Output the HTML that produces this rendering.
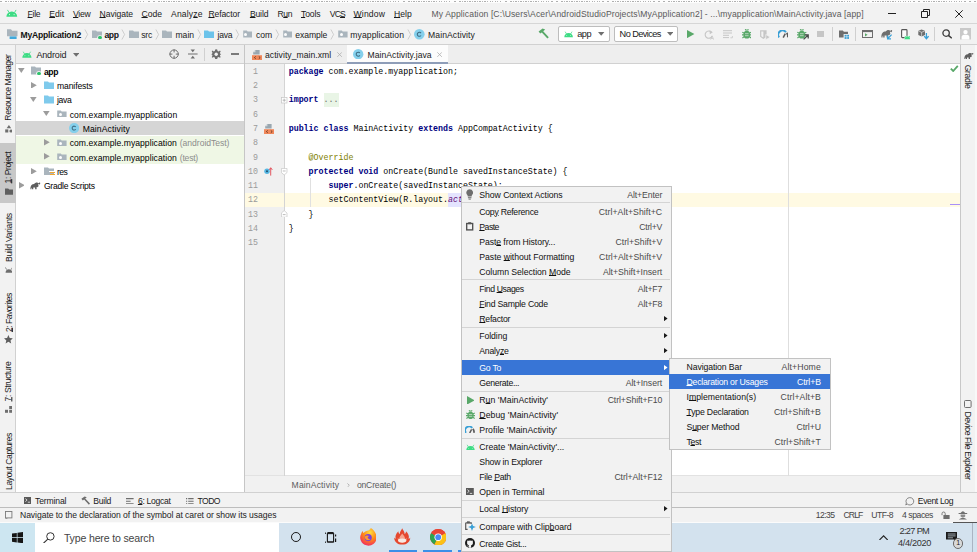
<!DOCTYPE html>
<html><head><meta charset="utf-8"><title>Android Studio</title>
<style>
html,body{margin:0;padding:0;}
body{width:977px;height:552px;overflow:hidden;position:relative;background:#f2f2f2;font-family:"Liberation Sans",sans-serif;}
.t{position:absolute;white-space:pre;font-family:"Liberation Sans",sans-serif;}
.r{position:absolute;}
u{text-decoration:underline;text-underline-offset:0.4px;text-decoration-thickness:0.7px;}
</style></head><body>
<div class="r" style="left:0px;top:0px;width:977px;height:552px;background:#f2f2f2;"></div>
<div class="r" style="left:0px;top:23px;width:977px;height:0.9px;background:#d6d6d6;"></div>
<div class="r" style="left:0px;top:44px;width:977px;height:1px;background:#d1d1d1;"></div>
<div class="r" style="left:15px;top:45px;width:1px;height:448px;background:#d1d1d1;"></div>
<div class="r" style="left:16px;top:45px;width:944px;height:18px;background:#eeeeee;"></div>
<div class="r" style="left:16px;top:63.6px;width:228px;height:429px;background:#fff;"></div>
<div class="r" style="left:16px;top:62.8px;width:228px;height:1px;background:#d1d1d1;"></div>
<div class="r" style="left:243.8px;top:45px;width:1px;height:447px;background:#c6c6c6;"></div>
<div class="r" style="left:244.8px;top:63.8px;width:715.2px;height:412px;background:#fff;"></div>
<div class="r" style="left:244.8px;top:62.9px;width:715.2px;height:1px;background:#d1d1d1;"></div>
<div class="r" style="left:244.8px;top:63.8px;width:39.6px;height:412px;background:#f0f0f0;"></div>
<div class="r" style="left:960px;top:45px;width:0.9px;height:447px;background:#c8c8c8;"></div>
<div class="r" style="left:244.8px;top:475.4px;width:715.2px;height:16.6px;background:#f1f1f1;"></div>
<div class="r" style="left:244.8px;top:475.2px;width:715.2px;height:0.8px;background:#e2e2e2;"></div>
<div class="r" style="left:0px;top:492px;width:977px;height:1px;background:#d1d1d1;"></div>
<div class="r" style="left:0px;top:506.8px;width:977px;height:0.9px;background:#bdbdbd;"></div>
<div class="r" style="left:0px;top:0px;width:977px;height:3.2px;background:#fdfdfd;"></div>
<div class="r" style="left:0;top:0.7px;width:977px;height:1.1px;background:repeating-linear-gradient(90deg,#9c9c9c 0 1.7px,#fdfdfd 1.7px 2.7px,#a4a4a4 2.7px 3.5px,#fdfdfd 3.5px 5.1px);opacity:.8"></div>
<svg class="r" style="left:6px;top:9.2px;" width="11.6" height="8" viewBox="0 0 13 9"><path d="M0.4 8.8 A6.1 6 0 0 1 12.6 8.8 Z" fill="#3ddc84"/><path d="M3.2 3.6 L1.9 1.4 M9.8 3.6 L11.1 1.4" stroke="#3ddc84" stroke-width="1" stroke-linecap="round"/><circle cx="3.9" cy="6.3" r="0.6" fill="#eafff3"/><circle cx="9.1" cy="6.3" r="0.6" fill="#eafff3"/></svg>
<div class="t" style="top:8.71px;height:11.18px;line-height:11.18px;font-size:8.6px;color:#1a1a1a;left:27.6px;letter-spacing:-0.290px;"><u>F</u>ile</div>
<div class="t" style="top:8.71px;height:11.18px;line-height:11.18px;font-size:8.6px;color:#1a1a1a;left:49.3px;letter-spacing:-0.028px;"><u>E</u>dit</div>
<div class="t" style="top:8.71px;height:11.18px;line-height:11.18px;font-size:8.6px;color:#1a1a1a;left:73px;letter-spacing:-0.246px;"><u>V</u>iew</div>
<div class="t" style="top:8.71px;height:11.18px;line-height:11.18px;font-size:8.6px;color:#1a1a1a;left:99.5px;letter-spacing:-0.053px;"><u>N</u>avigate</div>
<div class="t" style="top:8.71px;height:11.18px;line-height:11.18px;font-size:8.6px;color:#1a1a1a;left:141.5px;letter-spacing:-0.012px;"><u>C</u>ode</div>
<div class="t" style="top:8.71px;height:11.18px;line-height:11.18px;font-size:8.6px;color:#1a1a1a;left:171px;letter-spacing:0.146px;">Analy<u>z</u>e</div>
<div class="t" style="top:8.71px;height:11.18px;line-height:11.18px;font-size:8.6px;color:#1a1a1a;left:208.4px;letter-spacing:-0.111px;"><u>R</u>efactor</div>
<div class="t" style="top:8.71px;height:11.18px;line-height:11.18px;font-size:8.6px;color:#1a1a1a;left:249.9px;letter-spacing:-0.142px;"><u>B</u>uild</div>
<div class="t" style="top:8.71px;height:11.18px;line-height:11.18px;font-size:8.6px;color:#1a1a1a;left:277.5px;letter-spacing:-0.422px;">R<u>u</u>n</div>
<div class="t" style="top:8.71px;height:11.18px;line-height:11.18px;font-size:8.6px;color:#1a1a1a;left:301px;letter-spacing:-0.113px;"><u>T</u>ools</div>
<div class="t" style="top:8.71px;height:11.18px;line-height:11.18px;font-size:8.6px;color:#1a1a1a;left:329.7px;letter-spacing:-0.791px;">VC<u>S</u></div>
<div class="t" style="top:8.71px;height:11.18px;line-height:11.18px;font-size:8.6px;color:#1a1a1a;left:353.6px;letter-spacing:0.137px;"><u>W</u>indow</div>
<div class="t" style="top:8.71px;height:11.18px;line-height:11.18px;font-size:8.6px;color:#1a1a1a;left:394px;letter-spacing:0.003px;"><u>H</u>elp</div>
<div class="t" style="top:8.71px;height:11.18px;line-height:11.18px;font-size:8.6px;color:#5a5a5a;left:431.6px;letter-spacing:0.099px;">My Application [C:\Users\Acer\AndroidStudioProjects\MyApplication2] - ...\myapplication\MainActivity.java [app]</div>
<div class="r" style="left:888px;top:13px;width:7.5px;height:1px;background:#222;"></div>
<svg class="r" style="left:921px;top:9px;" width="9" height="9" viewBox="0 0 9 9"><path d="M0.5 2.5 H6.5 V8.5 H0.5 Z M2.5 2.5 V0.5 H8.5 V6.5 H6.5" fill="none" stroke="#222" stroke-width="1"/></svg>
<svg class="r" style="left:955px;top:9.5px;" width="8" height="8" viewBox="0 0 8 8"><path d="M0.3 0.3 L7.7 7.7 M7.7 0.3 L0.3 7.7" stroke="#222" stroke-width="1"/></svg>
<svg class="r" style="left:7px;top:29.2px;" width="11" height="10.5" viewBox="0 0 11 10.5"><path d="M0 0.3 H4 L5.2 1.8 H10.5 V7.2 H0 Z" fill="#aab5bd"/><rect x="2.6" y="7.4" width="7" height="2.6" fill="#40a9dc"/></svg>
<div class="t" style="top:29.51px;height:11.18px;line-height:11.18px;font-size:8.6px;color:#111;left:20.5px;font-weight:bold;letter-spacing:-0.215px;">MyApplication2</div>
<svg class="r" style="left:84px;top:28.799999999999997px;" width="5" height="11" viewBox="0 0 5 11"><path d="M0.9 0.5 L3.6 5.5 L0.9 10.5" fill="none" stroke="#c2c2c2" stroke-width="0.75"/></svg>
<svg class="r" style="left:91.5px;top:29.75px;" width="10.5" height="8.5" viewBox="0 0 10.5 8.5"><path d="M0 0.5 H4 L5 1.6 H10.5 V8.5 H0 Z" fill="#aab5bd"/></svg>
<div class="r" style="left:98.2px;top:35.5px;width:3.6px;height:3.6px;border-radius:50%;background:#2dc26b;box-shadow:0 0 0 0.8px #f2f2f2"></div>
<div class="t" style="top:29.51px;height:11.18px;line-height:11.18px;font-size:8.6px;color:#111;left:104.4px;font-weight:bold;letter-spacing:-0.360px;">app</div>
<svg class="r" style="left:121px;top:28.799999999999997px;" width="5" height="11" viewBox="0 0 5 11"><path d="M0.9 0.5 L3.6 5.5 L0.9 10.5" fill="none" stroke="#c2c2c2" stroke-width="0.75"/></svg>
<svg class="r" style="left:128.6px;top:29.75px;" width="10.5" height="8.5" viewBox="0 0 10.5 8.5"><path d="M0 0.5 H4 L5 1.6 H10.5 V8.5 H0 Z" fill="#aab5bd"/></svg>
<div class="t" style="top:29.51px;height:11.18px;line-height:11.18px;font-size:8.6px;color:#1a1a1a;left:141.3px;letter-spacing:-0.256px;">src</div>
<svg class="r" style="left:154.8px;top:28.799999999999997px;" width="5" height="11" viewBox="0 0 5 11"><path d="M0.9 0.5 L3.6 5.5 L0.9 10.5" fill="none" stroke="#c2c2c2" stroke-width="0.75"/></svg>
<svg class="r" style="left:161.5px;top:29.75px;" width="10.5" height="8.5" viewBox="0 0 10.5 8.5"><path d="M0 0.5 H4 L5 1.6 H10.5 V8.5 H0 Z" fill="#aab5bd"/></svg>
<div class="t" style="top:29.51px;height:11.18px;line-height:11.18px;font-size:8.6px;color:#1a1a1a;left:175.4px;letter-spacing:0.040px;">main</div>
<svg class="r" style="left:197.3px;top:28.799999999999997px;" width="5" height="11" viewBox="0 0 5 11"><path d="M0.9 0.5 L3.6 5.5 L0.9 10.5" fill="none" stroke="#c2c2c2" stroke-width="0.75"/></svg>
<svg class="r" style="left:203.8px;top:29.75px;" width="10.5" height="8.5" viewBox="0 0 10.5 8.5"><path d="M0 0.5 H4 L5 1.6 H10.5 V8.5 H0 Z" fill="#6cc3ea"/></svg>
<div class="t" style="top:29.51px;height:11.18px;line-height:11.18px;font-size:8.6px;color:#1a1a1a;left:217.6px;letter-spacing:-0.291px;">java</div>
<svg class="r" style="left:235px;top:28.799999999999997px;" width="5" height="11" viewBox="0 0 5 11"><path d="M0.9 0.5 L3.6 5.5 L0.9 10.5" fill="none" stroke="#c2c2c2" stroke-width="0.75"/></svg>
<svg class="r" style="left:242.5px;top:29.999999999999996px;" width="9.8" height="7.6" viewBox="0 0 10.5 8.5"><path d="M0 0.5 H4 L5 1.6 H10.5 V8.5 H0 Z" fill="#aab5bd"/></svg>
<div class="r" style="left:244.30px;top:33.00px;width:3px;height:3px;border-radius:50%;background:#fdfdfd"></div>
<div class="t" style="top:29.51px;height:11.18px;line-height:11.18px;font-size:8.6px;color:#1a1a1a;left:256px;letter-spacing:0.017px;">com</div>
<svg class="r" style="left:275px;top:28.799999999999997px;" width="5" height="11" viewBox="0 0 5 11"><path d="M0.9 0.5 L3.6 5.5 L0.9 10.5" fill="none" stroke="#c2c2c2" stroke-width="0.75"/></svg>
<svg class="r" style="left:282.5px;top:29.999999999999996px;" width="9.8" height="7.6" viewBox="0 0 10.5 8.5"><path d="M0 0.5 H4 L5 1.6 H10.5 V8.5 H0 Z" fill="#aab5bd"/></svg>
<div class="r" style="left:284.30px;top:33.00px;width:3px;height:3px;border-radius:50%;background:#fdfdfd"></div>
<div class="t" style="top:29.51px;height:11.18px;line-height:11.18px;font-size:8.6px;color:#1a1a1a;left:295.3px;letter-spacing:-0.083px;">example</div>
<svg class="r" style="left:330px;top:28.799999999999997px;" width="5" height="11" viewBox="0 0 5 11"><path d="M0.9 0.5 L3.6 5.5 L0.9 10.5" fill="none" stroke="#c2c2c2" stroke-width="0.75"/></svg>
<svg class="r" style="left:337.9px;top:29.999999999999996px;" width="9.8" height="7.6" viewBox="0 0 10.5 8.5"><path d="M0 0.5 H4 L5 1.6 H10.5 V8.5 H0 Z" fill="#aab5bd"/></svg>
<div class="r" style="left:339.70px;top:33.00px;width:3px;height:3px;border-radius:50%;background:#fdfdfd"></div>
<div class="t" style="top:29.51px;height:11.18px;line-height:11.18px;font-size:8.6px;color:#1a1a1a;left:350.3px;letter-spacing:0.089px;">myapplication</div>
<svg class="r" style="left:407px;top:28.799999999999997px;" width="5" height="11" viewBox="0 0 5 11"><path d="M0.9 0.5 L3.6 5.5 L0.9 10.5" fill="none" stroke="#c2c2c2" stroke-width="0.75"/></svg>
<svg class="r" style="left:414.2px;top:29.000000000000004px;" width="10.6" height="10.6" viewBox="0 0 10.6 10.6"><circle cx="5.3" cy="5.3" r="5.3" fill="#85d0ec"/><path d="M7 4.1 A2.05 2.05 0 1 0 7 6.5" fill="none" stroke="#3f6b82" stroke-width="1.05"/></svg>
<div class="t" style="top:29.51px;height:11.18px;line-height:11.18px;font-size:8.6px;color:#1a1a1a;left:428px;letter-spacing:0.096px;">MainActivity</div>
<svg class="r" style="left:538px;top:28.4px;" width="11.5" height="11" viewBox="0 0 11.5 11"><path d="M0.6 3.6 L4.6 0.6 L7.2 1.6 L5.2 3.2 L10.8 9.3 L9.4 10.6 L3.8 4.4 L2.2 5.6 Z" fill="#59a869"/></svg>
<div class="r" style="left:557.8px;top:26.4px;width:50.100000000000094px;height:13.4px;background:#fff;border:0.8px solid #bdbdbd;border-radius:2px;box-sizing:content-box"></div>
<svg class="r" style="left:563.8px;top:31.2px;" width="9.2" height="6.4" viewBox="0 0 13 9"><path d="M0.4 8.8 A6.1 6 0 0 1 12.6 8.8 Z" fill="#3ddc84"/><path d="M3.2 3.6 L1.9 1.4 M9.8 3.6 L11.1 1.4" stroke="#3ddc84" stroke-width="1" stroke-linecap="round"/><circle cx="3.9" cy="6.3" r="0.6" fill="#eafff3"/><circle cx="9.1" cy="6.3" r="0.6" fill="#eafff3"/></svg>
<div class="t" style="top:29.42px;height:11.96px;line-height:11.96px;font-size:9.2px;color:#1a1a1a;left:577.3px;letter-spacing:-0.548px;">app</div>
<svg class="r" style="left:598.3px;top:32.4px;" width="6.4" height="3.8" viewBox="0 0 6.4 3.8"><path d="M0 0 H6.4 L3.2 3.8 Z" fill="#6e6e6e"/></svg>
<div class="r" style="left:614.4px;top:26.4px;width:61.800000000000026px;height:13.4px;background:#fff;border:0.8px solid #bdbdbd;border-radius:2px;box-sizing:content-box"></div>
<div class="t" style="top:29.42px;height:11.96px;line-height:11.96px;font-size:9.2px;color:#1a1a1a;left:619.6px;letter-spacing:-0.568px;">No Devices</div>
<svg class="r" style="left:666.8px;top:32.4px;" width="6.4" height="3.8" viewBox="0 0 6.4 3.8"><path d="M0 0 H6.4 L3.2 3.8 Z" fill="#6e6e6e"/></svg>
<svg class="r" style="left:687.4px;top:30.2px;" width="7.4" height="8.2" viewBox="0 0 7.4 8.2"><path d="M0 0 L7.4 4.1 L0 8.2 Z" fill="#59a869"/></svg>
<svg class="r" style="left:703.6px;top:29.6px;" width="10.5" height="10" viewBox="0 0 10.5 10"><path d="M7.4 2.2 A3.6 3.6 0 1 0 8 6.2" fill="none" stroke="#c6c6c6" stroke-width="1.1"/><path d="M5.6 0.2 L8.8 2.3 L5.8 4.2 Z" fill="#c6c6c6"/><path d="M6.6 9.6 L8.1 5.8 L9.6 9.6 M7.1 8.4 H9.1" fill="none" stroke="#c6c6c6" stroke-width="0.8"/></svg>
<svg class="r" style="left:723px;top:30.2px;" width="10.5" height="9" viewBox="0 0 10.5 9"><path d="M0 0.7 H9 M0 3 H9 M0 5.3 H6 M0 7.6 H6" stroke="#c6c6c6" stroke-width="1"/><path d="M7.4 7.8 H9.4 V6 " fill="none" stroke="#c6c6c6" stroke-width="0.8"/></svg>
<svg class="r" style="left:741.5px;top:28.8px;" width="9.6" height="9.8" viewBox="0 0 9.6 9.8"><ellipse cx="4.8" cy="5.7" rx="3.3" ry="3.9" fill="#59a869"/><path d="M3 1.6 A1.9 1.7 0 0 1 6.6 1.6 Z" fill="#59a869"/><path d="M0.3 3.2 L2.4 4.2 M9.3 3.2 L7.2 4.2 M0 5.9 H2.2 M9.6 5.9 H7.4 M0.4 8.9 L2.4 7.6 M9.2 8.9 L7.2 7.6 M3.2 0.2 L3.8 1 M6.4 0.2 L5.8 1" stroke="#59a869" stroke-width="1.15"/><path d="M3 4.7 H6.6 M3 6.7 H6.6" stroke="#f2f2f2" stroke-width="0.6"/></svg>
<svg class="r" style="left:759.8px;top:29.6px;" width="10.6" height="10" viewBox="0 0 10.6 10"><path d="M0.7 0.9 H6 V6.4 L3.35 8.3 L0.7 6.4 Z" fill="none" stroke="#c6c6c6" stroke-width="1.2"/><path d="M3.35 0.9 H6 V6.4 L3.35 8.3 Z" fill="#c6c6c6"/><path d="M5.8 4.4 L10.2 7.1 L5.8 9.8 Z" fill="#c6c6c6" stroke="#f2f2f2" stroke-width="0.7"/></svg>
<svg class="r" style="left:777.8px;top:29.8px;" width="10.6" height="8" viewBox="0 0 10.6 8"><path d="M1.1 7.4 A4.3 4.3 0 0 1 8 2.2" fill="none" stroke="#389fd6" stroke-width="2"/><path d="M8.6 3 A4.3 4.3 0 0 1 9.7 7.4" fill="none" stroke="#5a5a5a" stroke-width="1.8"/><path d="M5.2 7.6 L7.3 3.6" stroke="#5a5a5a" stroke-width="1.5"/></svg>
<svg class="r" style="left:797.2px;top:28.8px;" width="9.6" height="9.8" viewBox="0 0 9.6 9.8"><ellipse cx="4.8" cy="5.7" rx="3.3" ry="3.9" fill="#59a869"/><path d="M3 1.6 A1.9 1.7 0 0 1 6.6 1.6 Z" fill="#59a869"/><path d="M0.3 3.2 L2.4 4.2 M9.3 3.2 L7.2 4.2 M0 5.9 H2.2 M9.6 5.9 H7.4 M0.4 8.9 L2.4 7.6 M9.2 8.9 L7.2 7.6 M3.2 0.2 L3.8 1 M6.4 0.2 L5.8 1" stroke="#59a869" stroke-width="1.15"/><path d="M3 4.7 H6.6 M3 6.7 H6.6" stroke="#f2f2f2" stroke-width="0.6"/></svg>
<svg class="r" style="left:802.6px;top:34px;" width="6" height="6" viewBox="0 0 6 6"><path d="M0.6 5.4 L4.6 1.4 M1.6 0.8 H5.2 V4.4" fill="none" stroke="#4a4a4a" stroke-width="1.3"/></svg>
<div class="r" style="left:817px;top:30.6px;width:6.8px;height:6.8px;background:#c6c6c6;"></div>
<div class="r" style="left:832px;top:27px;width:0.9px;height:13.5px;background:#cfcfcf;"></div>
<svg class="r" style="left:839px;top:30.2px;" width="10.4" height="9" viewBox="0 0 10.4 9"><path d="M0 0.4 H3.8 L4.9 1.7 H9 V4 H4.6 V7.6 H0 Z" fill="#6e6e6e"/><rect x="5.6" y="4.8" width="2" height="1.8" fill="#389fd6"/><rect x="8.2" y="4.8" width="2" height="1.8" fill="#389fd6"/><rect x="5.6" y="7.1" width="2" height="1.8" fill="#389fd6"/><rect x="8.2" y="7.1" width="2" height="1.8" fill="#389fd6"/></svg>
<div class="r" style="left:855px;top:27px;width:0.9px;height:13.5px;background:#cfcfcf;"></div>
<svg class="r" style="left:862px;top:30.2px;" width="11" height="8" viewBox="0 0 11 8"><rect x="0.5" y="0.5" width="10" height="7" fill="none" stroke="#6e6e6e" stroke-width="1"/><rect x="0.5" y="0.5" width="10" height="1.6" fill="#6e6e6e"/><path d="M3 3.2 L5.6 4.8 L3 6.4 Z" fill="#59a869"/></svg>
<svg class="r" style="left:881px;top:29.4px;" width="12" height="10.6" viewBox="0 0 12 10.6"><path d="M0.4 8.4 C0.2 4.6 2 2.6 4.6 2.6 C5.6 1 8 0.4 9.4 1.8 C10.6 0.4 11.6 1.4 11 2.6 C10.4 3.6 9.4 3 9.8 2.4 C8.8 2.6 8.8 3.8 9.4 4.6 C9 6 8 6.4 7.2 6 V8.4 H5.6 V6.6 H3.6 V8.4 H2.2 V6.4 C1.6 6.8 1.4 7.6 1.6 8.4 Z" fill="#6e6e6e"/><path d="M10.6 5.6 L7 9.4 M6.6 6.4 V9.8 H10" fill="none" stroke="#389fd6" stroke-width="1.3"/></svg>
<svg class="r" style="left:900.6px;top:29.4px;" width="9.8" height="10.6" viewBox="0 0 9.8 10.6"><rect x="0.6" y="0.6" width="5.4" height="8" rx="0.8" fill="#fbfbfb" stroke="#555" stroke-width="1.1"/><path d="M3.2 10.5 A3.2 3.4 0 0 1 9.6 10.5 Z" fill="#3ddc84" stroke="#f2f2f2" stroke-width="0.5"/><path d="M4.6 8 L3.9 6.9 M8.2 8 L8.9 6.9" stroke="#3ddc84" stroke-width="0.7"/></svg>
<svg class="r" style="left:918px;top:29.4px;" width="11" height="10.6" viewBox="0 0 11 10.6"><path d="M3.6 0.4 L7 1.8 V6 L3.6 7.6 L0.3 6 V1.8 Z" fill="#6e6e6e"/><path d="M0.3 1.8 L3.6 3.3 L7 1.8 M3.6 3.3 V7.6" fill="none" stroke="#f2f2f2" stroke-width="0.6"/><path d="M8.4 4 V9.2 M6.2 7.2 L8.4 9.8 L10.6 7.2" fill="none" stroke="#389fd6" stroke-width="1.3"/></svg>
<div class="r" style="left:934.2px;top:27px;width:0.9px;height:13.5px;background:#cfcfcf;"></div>
<svg class="r" style="left:941.8px;top:29.4px;" width="10.4" height="9.6" viewBox="0 0 10.4 9.6"><circle cx="4.1" cy="4.1" r="3.2" fill="none" stroke="#3c3c3c" stroke-width="1.3"/><path d="M6.4 6.4 L9.8 9.2" stroke="#3c3c3c" stroke-width="1.5"/></svg>
<svg class="r" style="left:959.7px;top:28.3px;" width="11" height="11.5" viewBox="0 0 11 11.5"><rect width="11" height="11.5" fill="#c9c9c9"/><circle cx="5.5" cy="4.1" r="2.2" fill="#fff"/><path d="M1.6 11.5 V9 C1.6 7.4 3 6.8 5.5 6.8 C8 6.8 9.4 7.4 9.4 9 V11.5 Z" fill="#fff"/></svg>
<div class="r" style="left:0px;top:143.2px;width:16px;height:60.3px;background:#c8c8c8;"></div>
<div class="t" style="left:-23.85px;top:82.36px;width:66.10px;height:11.18px;line-height:11.18px;font-size:8.6px;color:#1a1a1a;letter-spacing:-0.437px;transform:rotate(-90deg);transform-origin:50% 50%;">Resource Manager</div>
<svg class="r" style="left:4.6px;top:125px;" width="7.8" height="7.8" viewBox="0 0 7.8 7.8"><path d="M3.9 0 L6.2 3.2 H1.6 Z" fill="#6e6e6e"/><rect x="0.2" y="4.4" width="3.1" height="3.1" fill="#6e6e6e"/><circle cx="6" cy="6" r="1.6" fill="#6e6e6e"/></svg>
<div class="t" style="left:-6.60px;top:162.41px;width:31.60px;height:11.18px;line-height:11.18px;font-size:8.6px;color:#1a1a1a;letter-spacing:-0.471px;transform:rotate(-90deg);transform-origin:50% 50%;"><u>1</u>: Project</div>
<svg class="r" style="left:4.5px;top:187.9px;" width="8" height="6.8" viewBox="0 0 8 6.8"><path d="M0 0.4 H3.2 L4.2 1.5 H8 V6.8 H0 Z" fill="#5e5e5e"/></svg>
<div class="t" style="left:-15.25px;top:232.46px;width:48.90px;height:11.18px;line-height:11.18px;font-size:8.6px;color:#1a1a1a;letter-spacing:-0.249px;transform:rotate(-90deg);transform-origin:50% 50%;">Build Variants</div>
<svg class="r" style="left:4.5px;top:266.6px;" width="7.8" height="6" viewBox="0 0 7.8 6"><path d="M0.6 5.8 A3.3 3.6 0 0 1 7.2 5.8 Z" fill="#6e6e6e"/><path d="M1.6 2.6 L0.4 0.4 M6.2 2.6 L7.4 0.4" stroke="#6e6e6e" stroke-width="0.8"/></svg>
<div class="t" style="left:-10.25px;top:306.56px;width:38.90px;height:11.18px;line-height:11.18px;font-size:8.6px;color:#1a1a1a;letter-spacing:-0.501px;transform:rotate(-90deg);transform-origin:50% 50%;"><u>2</u>: Favorites</div>
<svg class="r" style="left:4px;top:335.2px;" width="8.8" height="8.4" viewBox="0 0 8.8 8.4"><path d="M4.4 0 L5.7 3 L8.8 3.3 L6.5 5.4 L7.2 8.4 L4.4 6.8 L1.6 8.4 L2.3 5.4 L0 3.3 L3.1 3 Z" fill="#5e5e5e"/></svg>
<div class="t" style="left:-10.70px;top:376.11px;width:39.80px;height:11.18px;line-height:11.18px;font-size:8.6px;color:#1a1a1a;letter-spacing:-0.385px;transform:rotate(-90deg);transform-origin:50% 50%;"><u>7</u>: Structure</div>
<svg class="r" style="left:5px;top:406.4px;" width="7.4" height="6.8" viewBox="0 0 7.4 6.8"><rect x="0" y="3.8" width="3" height="3" fill="#6e6e6e"/><rect x="4.2" y="3.8" width="3" height="3" fill="#6e6e6e"/><rect x="4.2" y="0" width="3" height="3" fill="#6e6e6e"/></svg>
<div class="t" style="left:-19.15px;top:456.36px;width:56.70px;height:11.18px;line-height:11.18px;font-size:8.6px;color:#1a1a1a;letter-spacing:-0.424px;transform:rotate(-90deg);transform-origin:50% 50%;">Layout Captures</div>
<svg class="r" style="left:22.4px;top:51.2px;" width="9.8" height="6.8" viewBox="0 0 13 9"><path d="M0.4 8.8 A6.1 6 0 0 1 12.6 8.8 Z" fill="#3ddc84"/><path d="M3.2 3.6 L1.9 1.4 M9.8 3.6 L11.1 1.4" stroke="#3ddc84" stroke-width="1" stroke-linecap="round"/><circle cx="3.9" cy="6.3" r="0.6" fill="#eafff3"/><circle cx="9.1" cy="6.3" r="0.6" fill="#eafff3"/></svg>
<div class="t" style="top:49.55px;height:11.7px;line-height:11.7px;font-size:9px;color:#1a1a1a;left:36.4px;letter-spacing:-0.147px;">Android</div>
<svg class="r" style="left:72.8px;top:53.300000000000004px;" width="6.4" height="3.8" viewBox="0 0 6.4 3.8"><path d="M0 0 H6.4 L3.2 3.8 Z" fill="#6e6e6e"/></svg>
<svg class="r" style="left:169.2px;top:49.1px;" width="10.2" height="10.2" viewBox="0 0 10.2 10.2"><circle cx="5.1" cy="5.1" r="4.2" fill="none" stroke="#6e6e6e" stroke-width="1"/><path d="M5.1 0.4 V3.4 M5.1 6.8 V9.8 M0.4 5.1 H3.4 M6.8 5.1 H9.8" stroke="#6e6e6e" stroke-width="1"/></svg>
<svg class="r" style="left:188px;top:49.2px;" width="9.6" height="10" viewBox="0 0 9.6 10"><path d="M0 5 H9.6" stroke="#6e6e6e" stroke-width="1"/><path d="M2.6 0.6 L4.8 3.2 L7 0.6 Z M2.6 9.4 L4.8 6.8 L7 9.4 Z" fill="#6e6e6e"/></svg>
<div class="r" style="left:204px;top:48px;width:0.9px;height:13px;background:#d0d0d0;"></div>
<svg class="r" style="left:211.2px;top:49.0px;" width="10.4" height="10.4" viewBox="0 0 10.4 10.4"><path d="M5.2 0.3 L6.2 0.4 L6.6 1.9 L7.7 2.4 L9 1.6 L9.7 2.4 L8.9 3.7 L9.3 4.7 L10.2 5.2 L9.3 5.7 L8.9 6.7 L9.7 8 L9 8.8 L7.7 8 L6.6 8.5 L6.2 10 L5.2 10.1 L4.2 10 L3.8 8.5 L2.7 8 L1.4 8.8 L0.7 8 L1.5 6.7 L1.1 5.7 L0.2 5.2 L1.1 4.7 L1.5 3.7 L0.7 2.4 L1.4 1.6 L2.7 2.4 L3.8 1.9 L4.2 0.4 Z" fill="#6e6e6e"/><circle cx="5.2" cy="5.2" r="1.7" fill="#f2f2f2"/></svg>
<div class="r" style="left:230.9px;top:52.9px;width:8.4px;height:1.9px;background:#7a7a7a;"></div>
<div class="r" style="left:16px;top:121.3px;width:228px;height:14.2px;background:#d5d5d5;"></div>
<div class="r" style="left:16px;top:135.5px;width:228px;height:28.4px;background:#eff7e5;"></div>
<svg class="r" style="left:18.3px;top:67.69999999999999px;" width="6.6" height="5.0" viewBox="0 0 6.6 5.0"><path d="M0 0 H6.6 L3.3 5 Z" fill="#9c9c9c"/></svg>
<svg class="r" style="left:30.8px;top:66.45px;" width="10.5" height="8.5" viewBox="0 0 10.5 8.5"><path d="M0 0.5 H4 L5 1.6 H10.5 V8.5 H0 Z" fill="#aab5bd"/></svg>
<div class="r" style="left:37.4px;top:72.1px;width:3.4px;height:3.4px;border-radius:50%;background:#2dc26b;box-shadow:0 0 0 0.8px #fff"></div>
<div class="t" style="top:66.81px;height:11.18px;line-height:11.18px;font-size:8.6px;color:#000;left:43.9px;font-weight:bold;letter-spacing:-0.327px;">app</div>
<svg class="r" style="left:31.1px;top:81.89999999999999px;" width="5.8" height="6.6" viewBox="0 0 5.8 6.6"><path d="M0 0 L5.8 3.3 L0 6.6 Z" fill="#9c9c9c"/></svg>
<svg class="r" style="left:43.9px;top:80.85px;" width="10.5" height="8.5" viewBox="0 0 10.5 8.5"><path d="M0 0.5 H4 L5 1.6 H10.5 V8.5 H0 Z" fill="#7fcaec"/></svg>
<div class="t" style="top:81.11px;height:11.18px;line-height:11.18px;font-size:8.6px;color:#000;left:56.9px;letter-spacing:-0.098px;">manifests</div>
<svg class="r" style="left:30.099999999999998px;top:96.69999999999999px;" width="6.6" height="5.0" viewBox="0 0 6.6 5.0"><path d="M0 0 H6.6 L3.3 5 Z" fill="#9c9c9c"/></svg>
<svg class="r" style="left:43.9px;top:95.14999999999999px;" width="10.5" height="8.5" viewBox="0 0 10.5 8.5"><path d="M0 0.5 H4 L5 1.6 H10.5 V8.5 H0 Z" fill="#7fcaec"/></svg>
<div class="t" style="top:95.41px;height:11.18px;line-height:11.18px;font-size:8.6px;color:#000;left:56.9px;letter-spacing:-0.291px;">java</div>
<svg class="r" style="left:43.300000000000004px;top:111.0px;" width="6.6" height="5.0" viewBox="0 0 6.6 5.0"><path d="M0 0 H6.6 L3.3 5 Z" fill="#9c9c9c"/></svg>
<svg class="r" style="left:56.9px;top:109.9px;" width="9.8" height="7.6" viewBox="0 0 10.5 8.5"><path d="M0 0.5 H4 L5 1.6 H10.5 V8.5 H0 Z" fill="#aab5bd"/></svg>
<div class="r" style="left:58.70px;top:112.90px;width:3px;height:3px;border-radius:50%;background:#fdfdfd"></div>
<div class="t" style="top:109.71px;height:11.18px;line-height:11.18px;font-size:8.6px;color:#000;left:69.7px;letter-spacing:0.062px;">com.example.myapplication</div>
<svg class="r" style="left:69.1px;top:123.1px;" width="10.2" height="10.2" viewBox="0 0 10.6 10.6"><circle cx="5.3" cy="5.3" r="5.3" fill="#85d0ec"/><path d="M7 4.1 A2.05 2.05 0 1 0 7 6.5" fill="none" stroke="#3f6b82" stroke-width="1.05"/></svg>
<div class="t" style="top:124.01px;height:11.18px;line-height:11.18px;font-size:8.6px;color:#000;left:82.7px;letter-spacing:0.113px;">MainActivity</div>
<svg class="r" style="left:43.8px;top:139.1px;" width="5.8" height="6.6" viewBox="0 0 5.8 6.6"><path d="M0 0 L5.8 3.3 L0 6.6 Z" fill="#9c9c9c"/></svg>
<svg class="r" style="left:56.9px;top:138.5px;" width="9.8" height="7.6" viewBox="0 0 10.5 8.5"><path d="M0 0.5 H4 L5 1.6 H10.5 V8.5 H0 Z" fill="#aab5bd"/></svg>
<div class="r" style="left:58.70px;top:141.50px;width:3px;height:3px;border-radius:50%;background:#fdfdfd"></div>
<div class="t" style="top:138.31px;height:11.18px;line-height:11.18px;font-size:8.6px;color:#000;left:69.7px;letter-spacing:0.042px;">com.example.myapplication</div>
<div class="t" style="top:138.31px;height:11.18px;line-height:11.18px;font-size:8.6px;color:#8c8c8c;left:179.8px;letter-spacing:-0.043px;">(androidTest)</div>
<svg class="r" style="left:43.8px;top:153.4px;" width="5.8" height="6.6" viewBox="0 0 5.8 6.6"><path d="M0 0 L5.8 3.3 L0 6.6 Z" fill="#9c9c9c"/></svg>
<svg class="r" style="left:56.9px;top:152.8px;" width="9.8" height="7.6" viewBox="0 0 10.5 8.5"><path d="M0 0.5 H4 L5 1.6 H10.5 V8.5 H0 Z" fill="#aab5bd"/></svg>
<div class="r" style="left:58.70px;top:155.80px;width:3px;height:3px;border-radius:50%;background:#fdfdfd"></div>
<div class="t" style="top:152.61px;height:11.18px;line-height:11.18px;font-size:8.6px;color:#000;left:69.7px;letter-spacing:0.042px;">com.example.myapplication</div>
<div class="t" style="top:152.61px;height:11.18px;line-height:11.18px;font-size:8.6px;color:#8c8c8c;left:179.8px;letter-spacing:-0.230px;">(test)</div>
<svg class="r" style="left:31.1px;top:167.70000000000002px;" width="5.8" height="6.6" viewBox="0 0 5.8 6.6"><path d="M0 0 L5.8 3.3 L0 6.6 Z" fill="#9c9c9c"/></svg>
<svg class="r" style="left:43.9px;top:166.65000000000003px;" width="10.5" height="8.5" viewBox="0 0 10.5 8.5"><path d="M0 0.5 H4 L5 1.6 H10.5 V8.5 H0 Z" fill="#aab5bd"/></svg>
<div class="r" style="left:50.2px;top:171.70000000000002px;width:4.4px;height:0.9px;background:#f0a732;"></div>
<div class="r" style="left:50.2px;top:173.50000000000003px;width:4.4px;height:0.9px;background:#f0a732;"></div>
<div class="r" style="left:49.4px;top:170.90000000000003px;width:5.6px;height:0.8px;background:#fff;"></div>
<div class="t" style="top:166.91px;height:11.18px;line-height:11.18px;font-size:8.6px;color:#000;left:56.9px;letter-spacing:-0.551px;">res</div>
<svg class="r" style="left:18.6px;top:182.0px;" width="5.8" height="6.6" viewBox="0 0 5.8 6.6"><path d="M0 0 L5.8 3.3 L0 6.6 Z" fill="#9c9c9c"/></svg>
<svg class="r" style="left:30px;top:181.0px;" width="11" height="9.4" viewBox="0 0 12 9"><path d="M0.4 8.4 C0.2 4.6 2 2.6 4.6 2.6 C5.6 1 8 0.4 9.4 1.8 C10.6 0.4 11.6 1.4 11 2.6 C10.4 3.6 9.4 3 9.8 2.4 C8.8 2.6 8.8 3.8 9.4 4.6 C9 6 8 6.4 7.2 6 V8.4 H5.6 V6.6 H3.6 V8.4 H2.2 V6.4 C1.6 6.8 1.4 7.6 1.6 8.4 Z" fill="#5e5e5e"/></svg>
<div class="t" style="top:181.21px;height:11.18px;line-height:11.18px;font-size:8.6px;color:#000;left:43.9px;letter-spacing:-0.254px;">Gradle Scripts</div>
<svg class="r" style="left:251.6px;top:50px;" width="10.6" height="10.0" viewBox="0 0 10.6 10"><path d="M3.4 0 H7.6 V4.6 H1.2 V2.2 Z" fill="#9aa7b0"/><path d="M1.2 2.2 L3.4 0 V2.2 Z" fill="#d8dde0"/><rect x="0" y="5.2" width="10.6" height="4.8" fill="#f0875a"/><path d="M3.8 6.4 L2.4 7.6 L3.8 8.8 M6.8 6.4 L8.2 7.6 L6.8 8.8" fill="none" stroke="#4a2a14" stroke-width="0.7"/></svg>
<div class="t" style="top:50.11px;height:11.18px;line-height:11.18px;font-size:8.6px;color:#1a1a1a;left:265px;letter-spacing:0.051px;">activity_main.xml</div>
<svg class="r" style="left:336.6px;top:52.0px;" width="5.2" height="5.2" viewBox="0 0 5.2 5.2"><path d="M0.3 0.3 L4.9 4.9 M4.9 0.3 L0.3 4.9" stroke="#b0b0b0" stroke-width="0.8"/></svg>
<div class="r" style="left:346.8px;top:45px;width:101.6px;height:17px;background:#fcfcfc;"></div>
<div class="r" style="left:346.8px;top:62px;width:101.6px;height:1.9px;background:#8e9db8;"></div>
<svg class="r" style="left:353.4px;top:48.599999999999994px;" width="10.4" height="10.4" viewBox="0 0 10.6 10.6"><circle cx="5.3" cy="5.3" r="5.3" fill="#85d0ec"/><path d="M7 4.1 A2.05 2.05 0 1 0 7 6.5" fill="none" stroke="#3f6b82" stroke-width="1.05"/></svg>
<div class="t" style="top:50.11px;height:11.18px;line-height:11.18px;font-size:8.6px;color:#1a1a1a;left:367.5px;letter-spacing:0.049px;">MainActivity.java</div>
<svg class="r" style="left:437.2px;top:52.0px;" width="5.2" height="5.2" viewBox="0 0 5.2 5.2"><path d="M0.3 0.3 L4.9 4.9 M4.9 0.3 L0.3 4.9" stroke="#b0b0b0" stroke-width="0.8"/></svg>
<div class="r" style="left:244.8px;top:192.6px;width:715.2px;height:14.2px;background:#fffae3;"></div>
<div class="r" style="left:284.2px;top:63.8px;width:0.8px;height:412px;background:#d4d4d4;"></div>
<div class="r" style="left:788.3px;top:63.8px;width:0.8px;height:412px;background:#dedede;"></div>
<div class="r" style="left:310px;top:177.5px;width:0.8px;height:29.5px;background:#e0e0e0;"></div>
<div class="t" style="top:66.91px;height:10.79px;line-height:10.79px;font-size:8.3px;color:#9a9a9a;right:719px;font-family:'Liberation Mono',monospace;">1</div>
<div class="t" style="top:81.18px;height:10.79px;line-height:10.79px;font-size:8.3px;color:#9a9a9a;right:719px;font-family:'Liberation Mono',monospace;">2</div>
<div class="t" style="top:95.45px;height:10.79px;line-height:10.79px;font-size:8.3px;color:#9a9a9a;right:719px;font-family:'Liberation Mono',monospace;">3</div>
<div class="t" style="top:109.72px;height:10.79px;line-height:10.79px;font-size:8.3px;color:#9a9a9a;right:719px;font-family:'Liberation Mono',monospace;">6</div>
<div class="t" style="top:123.99px;height:10.79px;line-height:10.79px;font-size:8.3px;color:#9a9a9a;right:719px;font-family:'Liberation Mono',monospace;">7</div>
<div class="t" style="top:138.25px;height:10.79px;line-height:10.79px;font-size:8.3px;color:#9a9a9a;right:719px;font-family:'Liberation Mono',monospace;">8</div>
<div class="t" style="top:152.53px;height:10.79px;line-height:10.79px;font-size:8.3px;color:#9a9a9a;right:719px;font-family:'Liberation Mono',monospace;">9</div>
<div class="t" style="top:166.8px;height:10.79px;line-height:10.79px;font-size:8.3px;color:#9a9a9a;right:719px;font-family:'Liberation Mono',monospace;">10</div>
<div class="t" style="top:181.06px;height:10.79px;line-height:10.79px;font-size:8.3px;color:#9a9a9a;right:719px;font-family:'Liberation Mono',monospace;">11</div>
<div class="t" style="top:195.34px;height:10.79px;line-height:10.79px;font-size:8.3px;color:#9a9a9a;right:719px;font-family:'Liberation Mono',monospace;">12</div>
<div class="t" style="top:209.6px;height:10.79px;line-height:10.79px;font-size:8.3px;color:#9a9a9a;right:719px;font-family:'Liberation Mono',monospace;">13</div>
<div class="t" style="top:223.88px;height:10.79px;line-height:10.79px;font-size:8.3px;color:#9a9a9a;right:719px;font-family:'Liberation Mono',monospace;">14</div>
<div class="t" style="top:238.15px;height:10.79px;line-height:10.79px;font-size:8.3px;color:#9a9a9a;right:719px;font-family:'Liberation Mono',monospace;">15</div>
<div class="t" style="top:66.91px;height:10.79px;line-height:10.79px;font-size:8.3px;color:#000080;left:288.7px;font-weight:bold;font-family:'Liberation Mono',monospace;">package</div>
<div class="t" style="top:66.91px;height:10.79px;line-height:10.79px;font-size:8.3px;color:#000;left:328.54px;font-family:'Liberation Mono',monospace;letter-spacing:0.001px;">com.example.myapplication;</div>
<div class="r" style="left:323.6px;top:92.6px;width:15px;height:14.2px;background:#e9f5e6;"></div>
<div class="t" style="top:95.45px;height:10.79px;line-height:10.79px;font-size:8.3px;color:#000080;left:288.7px;font-weight:bold;font-family:'Liberation Mono',monospace;">import</div>
<div class="t" style="top:95.45px;height:10.79px;line-height:10.79px;font-size:8.3px;color:#6a6a6a;left:323.56px;font-family:'Liberation Mono',monospace;">...</div>
<div class="t" style="top:123.99px;height:10.79px;line-height:10.79px;font-size:8.3px;color:#000080;left:288.7px;font-weight:bold;font-family:'Liberation Mono',monospace;">public</div>
<div class="t" style="top:123.99px;height:10.79px;line-height:10.79px;font-size:8.3px;color:#000080;left:323.56px;font-weight:bold;font-family:'Liberation Mono',monospace;letter-spacing:-0.001px;">class</div>
<div class="t" style="top:123.99px;height:10.79px;line-height:10.79px;font-size:8.3px;color:#000;left:353.44px;font-family:'Liberation Mono',monospace;">MainActivity</div>
<div class="t" style="top:123.99px;height:10.79px;line-height:10.79px;font-size:8.3px;color:#000080;left:418.18px;font-weight:bold;font-family:'Liberation Mono',monospace;">extends</div>
<div class="t" style="top:123.99px;height:10.79px;line-height:10.79px;font-size:8.3px;color:#000;left:458.02px;font-family:'Liberation Mono',monospace;">AppCompatActivity {</div>
<div class="t" style="top:152.53px;height:10.79px;line-height:10.79px;font-size:8.3px;color:#808000;left:308.62px;font-family:'Liberation Mono',monospace;">@Override</div>
<div class="t" style="top:166.8px;height:10.79px;line-height:10.79px;font-size:8.3px;color:#000080;left:308.62px;font-weight:bold;font-family:'Liberation Mono',monospace;">protected</div>
<div class="t" style="top:166.8px;height:10.79px;line-height:10.79px;font-size:8.3px;color:#000080;left:358.42px;font-weight:bold;font-family:'Liberation Mono',monospace;">void</div>
<div class="t" style="top:166.8px;height:10.79px;line-height:10.79px;font-size:8.3px;color:#000;left:383.32px;font-family:'Liberation Mono',monospace;">onCreate(Bundle savedInstanceState) {</div>
<div class="t" style="top:181.06px;height:10.79px;line-height:10.79px;font-size:8.3px;color:#000080;left:328.54px;font-weight:bold;font-family:'Liberation Mono',monospace;letter-spacing:-0.001px;">super</div>
<div class="t" style="top:181.06px;height:10.79px;line-height:10.79px;font-size:8.3px;color:#000;left:353.44px;font-family:'Liberation Mono',monospace;">.onCreate(savedInstanceState);</div>
<div class="r" style="left:448.4px;top:192.6px;width:14px;height:14.2px;background:#e4e4ff;"></div>
<div class="t" style="top:195.34px;height:10.79px;line-height:10.79px;font-size:8.3px;color:#000;left:328.54px;font-family:'Liberation Mono',monospace;">setContentView(R.layout.</div>
<div class="t" style="top:195.34px;height:10.79px;line-height:10.79px;font-size:8.3px;color:#660e7a;left:448.06px;font-style:italic;font-family:'Liberation Mono',monospace;">activity_main</div>
<div class="t" style="top:195.34px;height:10.79px;line-height:10.79px;font-size:8.3px;color:#000;left:512.8px;font-family:'Liberation Mono',monospace;letter-spacing:-0.004px;">);</div>
<div class="t" style="top:209.6px;height:10.79px;line-height:10.79px;font-size:8.3px;color:#000;left:308.62px;font-family:'Liberation Mono',monospace;">}</div>
<div class="t" style="top:223.88px;height:10.79px;line-height:10.79px;font-size:8.3px;color:#000;left:288.7px;font-family:'Liberation Mono',monospace;">}</div>
<svg class="r" style="left:281.2px;top:97.24px;" width="6.4" height="6.4" viewBox="0 0 6.4 6.4"><rect x="0.4" y="0.4" width="5.6" height="5.6" fill="#fff" stroke="#c4c4c4" stroke-width="0.7"/><path d="M1.6 3.2 H4.8" stroke="#a0a0a0" stroke-width="0.7"/><path d="M3.2 1.6 V4.8" stroke="#a0a0a0" stroke-width="0.7"/></svg>
<svg class="r" style="left:281.2px;top:168.19000000000003px;" width="6.6" height="7.6" viewBox="0 0 6.6 7.6"><path d="M0.4 0.4 H6 V4.6 L3.2 7 L0.4 4.6 Z" fill="#fff" stroke="#c4c4c4" stroke-width="0.7"/><path d="M1.8 3 H4.6" stroke="#a0a0a0" stroke-width="0.7"/></svg>
<svg class="r" style="left:281.2px;top:209.6px;" width="6.6" height="7.6" viewBox="0 0 6.6 7.6"><path d="M0.4 7.2 H6 V3 L3.2 0.6 L0.4 3 Z" fill="#fff" stroke="#c4c4c4" stroke-width="0.7"/><path d="M1.8 4.6 H4.6" stroke="#a0a0a0" stroke-width="0.7"/></svg>
<svg class="r" style="left:263.6px;top:123.9px;" width="10.6" height="10.0" viewBox="0 0 10.6 10"><path d="M3.4 0 H7.6 V4.6 H1.2 V2.2 Z" fill="#9aa7b0"/><path d="M1.2 2.2 L3.4 0 V2.2 Z" fill="#d8dde0"/><rect x="0" y="5.2" width="10.6" height="4.8" fill="#f0875a"/><path d="M3.8 6.4 L2.4 7.6 L3.8 8.8 M6.8 6.4 L8.2 7.6 L6.8 8.8" fill="none" stroke="#4a2a14" stroke-width="0.7"/></svg>
<svg class="r" style="left:263.8px;top:166.6px;" width="9" height="9" viewBox="0 0 9 9"><circle cx="3" cy="4.2" r="2.75" fill="#55b6e2"/><circle cx="3" cy="4.2" r="1" fill="#1f4f6e"/><path d="M6.7 8.6 V1 M5.1 2.9 L6.7 0.7 L8.3 2.9" fill="none" stroke="#e0505a" stroke-width="0.95"/></svg>
<svg class="r" style="left:950px;top:64.5px;" width="8.6" height="7" viewBox="0 0 8.6 7"><path d="M0.8 3.6 L3.2 6 L7.8 0.8" fill="none" stroke="#59a869" stroke-width="1.8"/></svg>
<div class="r" style="left:950.1px;top:203.9px;width:10px;height:1.2px;background:#a990f8;"></div>
<div class="t" style="top:479.61px;height:11.18px;line-height:11.18px;font-size:8.6px;color:#5c5c5c;left:291.6px;letter-spacing:0.138px;">MainActivity</div>
<div class="t" style="top:479.61px;height:11.18px;line-height:11.18px;font-size:8.6px;color:#5c5c5c;left:356.9px;letter-spacing:-0.168px;">onCreate()</div>
<svg class="r" style="left:347.4px;top:482.6px;" width="2.8" height="4.6" viewBox="0 0 2.8 4.6"><path d="M0.4 0.4 L2.3 2.3 L0.4 4.2" fill="none" stroke="#9a9a9a" stroke-width="0.7"/></svg>
<svg class="r" style="left:963.6px;top:52.4px;" width="10" height="7.6" viewBox="0 0 12 9"><path d="M0.4 8.4 C0.2 4.6 2 2.6 4.6 2.6 C5.6 1 8 0.4 9.4 1.8 C10.6 0.4 11.6 1.4 11 2.6 C10.4 3.6 9.4 3 9.8 2.4 C8.8 2.6 8.8 3.8 9.4 4.6 C9 6 8 6.4 7.2 6 V8.4 H5.6 V6.6 H3.6 V8.4 H2.2 V6.4 C1.6 6.8 1.4 7.6 1.6 8.4 Z" fill="#5e5e5e"/></svg>
<div class="t" style="left:954.85px;top:70.66px;width:23.90px;height:11.18px;line-height:11.18px;font-size:8.6px;color:#1a1a1a;letter-spacing:-0.316px;transform:rotate(90deg);transform-origin:50% 50%;">Gradle</div>
<svg class="r" style="left:964.4px;top:399.6px;" width="7.6" height="8.8" viewBox="0 0 7.6 8.8"><rect x="0.5" y="0.5" width="6.6" height="7" rx="1" fill="none" stroke="#6e6e6e" stroke-width="1"/><path d="M1.6 8.4 H6" stroke="#6e6e6e" stroke-width="0.8"/></svg>
<div class="t" style="left:932.70px;top:440.01px;width:68.20px;height:11.18px;line-height:11.18px;font-size:8.6px;color:#1a1a1a;letter-spacing:-0.435px;transform:rotate(90deg);transform-origin:50% 50%;">Device File Explorer</div>
<div class="r" style="left:975px;top:45px;width:2px;height:447px;background:#f8f8f8;"></div>
<svg class="r" style="left:23.8px;top:497px;" width="7.6" height="7" viewBox="0 0 7.6 7"><rect width="7.6" height="7" fill="#5a5a5a"/><path d="M1.4 1.6 L3.1 3.1 L1.4 4.6 M3.8 5.2 H6" fill="none" stroke="#f2f2f2" stroke-width="0.8"/></svg>
<div class="t" style="top:495.81px;height:11.18px;line-height:11.18px;font-size:8.6px;color:#1a1a1a;left:35.1px;letter-spacing:-0.148px;">Terminal</div>
<svg class="r" style="left:80.6px;top:496.4px;" width="9.6" height="9" viewBox="0 0 9.6 9"><path d="M0.4 2.8 L3.6 0.4 L5.8 1.2 L4.2 2.5 L9 7.6 L7.9 8.7 L3.1 3.5 L1.8 4.5 Z" fill="#6e6e6e"/></svg>
<div class="t" style="top:495.81px;height:11.18px;line-height:11.18px;font-size:8.6px;color:#1a1a1a;left:93.3px;letter-spacing:-0.262px;">Build</div>
<svg class="r" style="left:126.1px;top:497.6px;" width="7.8" height="6.6" viewBox="0 0 7.8 6.6"><path d="M0 0.6 H7.6 M0 3.2 H4.6 M0 5.8 H7.6" stroke="#6e6e6e" stroke-width="1.1"/></svg>
<div class="t" style="top:495.81px;height:11.18px;line-height:11.18px;font-size:8.6px;color:#1a1a1a;left:137.9px;letter-spacing:-0.307px;"><u>6</u>: Logcat</div>
<svg class="r" style="left:186.3px;top:497.6px;" width="7.8" height="6.6" viewBox="0 0 7.8 6.6"><path d="M2.2 0.6 H7.6 M2.2 3.2 H7.6 M2.2 5.8 H7.6" stroke="#6e6e6e" stroke-width="1.1"/><path d="M0 0.6 H1.2 M0 3.2 H1.2 M0 5.8 H1.2" stroke="#6e6e6e" stroke-width="1.1"/></svg>
<div class="t" style="top:495.81px;height:11.18px;line-height:11.18px;font-size:8.6px;color:#1a1a1a;left:197.6px;letter-spacing:-0.593px;">TODO</div>
<svg class="r" style="left:905.2px;top:496.8px;" width="9.6" height="8.8" viewBox="0 0 9.6 8.8"><path d="M4.8 0.6 A3.9 3.7 0 1 1 2.2 7 L0.8 8 L1.4 6 A3.9 3.7 0 0 1 4.8 0.6 Z" fill="none" stroke="#7a7a7a" stroke-width="0.9"/></svg>
<div class="t" style="top:495.81px;height:11.18px;line-height:11.18px;font-size:8.6px;color:#1a1a1a;left:917.8px;letter-spacing:-0.378px;">Event Log</div>
<svg class="r" style="left:5px;top:511.4px;" width="8" height="8" viewBox="0 0 8 8"><rect x="0.5" y="0.5" width="6.4" height="6.4" fill="none" stroke="#7a7a7a" stroke-width="0.9"/><path d="M0.5 7.6 H2.4" stroke="#7a7a7a" stroke-width="0.7"/></svg>
<div class="t" style="top:510.01px;height:11.18px;line-height:11.18px;font-size:8.6px;color:#222;left:20px;letter-spacing:-0.057px;">Navigate to the declaration of the symbol at caret or show its usages</div>
<div class="t" style="top:510.01px;height:11.18px;line-height:11.18px;font-size:8.6px;color:#444;left:815.8px;letter-spacing:-0.543px;">12:35</div>
<div class="t" style="top:510.01px;height:11.18px;line-height:11.18px;font-size:8.6px;color:#444;left:843.6px;letter-spacing:-0.938px;">CRLF</div>
<div class="t" style="top:510.01px;height:11.18px;line-height:11.18px;font-size:8.6px;color:#444;left:871.3px;letter-spacing:-0.532px;">UTF-8</div>
<div class="t" style="top:510.01px;height:11.18px;line-height:11.18px;font-size:8.6px;color:#444;left:902px;letter-spacing:-0.426px;">4 spaces</div>
<svg class="r" style="left:940.6px;top:510.8px;" width="9" height="8" viewBox="0 0 9 8"><rect x="2.4" y="4" width="6.2" height="4" fill="#6e6e6e"/><path d="M1 4.2 V2.6 A1.6 1.6 0 0 1 4.2 2.6 V4" fill="none" stroke="#6e6e6e" stroke-width="0.9"/></svg>
<svg class="r" style="left:958px;top:510px;" width="9.8" height="9.8" viewBox="0 0 9.8 9.8"><path d="M2.6 3 Q4.9 -0.6 7.2 3 Z" fill="#6e6e6e"/><rect x="0.6" y="3" width="8.6" height="1" fill="#6e6e6e"/><path d="M2.6 4.4 H7.2 V6.4 Q4.9 8.4 2.6 6.4 Z" fill="#8a8a8a"/><path d="M0.8 9.6 Q4.9 6 9 9.6 Z" fill="#6e6e6e"/></svg>
<div class="r" style="left:952.7px;top:521.8px;width:24.3px;height:1px;background:#555;"></div>
<div class="r" style="left:0px;top:522.2px;width:952.7px;height:0.9px;background:#fbfbfb;"></div>
<div class="r" style="left:0px;top:523px;width:977px;height:29px;background:#d3e2ee;"></div>
<div class="r" style="left:0px;top:523px;width:34.6px;height:29px;background:#cde6f1;"></div>
<svg class="r" style="left:12px;top:531.7px;" width="11.2" height="11.3" viewBox="0 0 11.2 11.3"><path d="M0 1.6 L4.8 0.9 V5.3 H0 Z M5.5 0.8 L11.2 0 V5.3 H5.5 Z M0 6 H4.8 V10.4 L0 9.7 Z M5.5 6 H11.2 V11.3 L5.5 10.5 Z" fill="#151515"/></svg>
<div class="r" style="left:35px;top:523.4px;width:244.4px;height:28.6px;background:#fff;"></div>
<svg class="r" style="left:43px;top:531.6px;" width="12" height="11.6" viewBox="0 0 12 11.6"><circle cx="7.4" cy="4.4" r="3.7" fill="none" stroke="#333" stroke-width="1"/><path d="M4.8 7.2 L0.5 11.2" stroke="#333" stroke-width="1.1"/></svg>
<div class="t" style="top:531.51px;height:13.78px;line-height:13.78px;font-size:10.6px;color:#454545;left:63.9px;letter-spacing:-0.176px;">Type here to search</div>
<div class="r" style="left:291.4px;top:531.8px;width:7.9px;height:7.9px;border:1.8px solid #151515;border-radius:50%"></div>
<svg class="r" style="left:325.2px;top:531.8px;" width="11.6" height="11.4" viewBox="0 0 11.6 11.4"><rect x="2.4" y="1.6" width="6.2" height="8.2" fill="none" stroke="#151515" stroke-width="1.1"/><path d="M0.5 0.6 V1.8 M0.5 9.6 V10.8 M2.4 0.5 H8.6 M2.4 10.9 H8.6" stroke="#151515" stroke-width="1"/><path d="M10.6 2.4 V4.4 M10.6 6.6 V10" stroke="#151515" stroke-width="1.2"/></svg>
<svg class="r" style="left:359.6px;top:528.3px;" width="16.8" height="17.4" viewBox="0 0 16.8 17.4"><defs><radialGradient id="ff" cx="0.6" cy="0.25" r="0.9"><stop offset="0" stop-color="#ffde3f"/><stop offset="0.45" stop-color="#ff8a16"/><stop offset="0.8" stop-color="#f43b55"/><stop offset="1" stop-color="#d4267a"/></radialGradient></defs><path d="M8.4 2.4 C10 1.6 10.6 0.8 10.8 0 C13.6 1.8 16.6 5 16.6 9.6 A8.2 8 0 1 1 1.2 5.8 C1.4 4.8 2 3.6 2.8 3 C2.8 4 3.2 4.6 3.6 5 C4.8 3.4 6.6 2.6 8.4 2.4 Z" fill="url(#ff)"/><circle cx="8.2" cy="9.6" r="3.6" fill="#7b3fd8"/><path d="M4.6 9 C5.6 7.2 8 7 9.4 8.2 C8.4 8.2 7.8 8.8 7.8 9.6 C7.8 10.6 9 11.4 10.4 10.8 C9.4 13 5.6 13 4.6 9 Z" fill="#ff9a2e"/></svg>
<svg class="r" style="left:394.2px;top:528.4px;" width="16.4" height="17" viewBox="0 0 16.4 17"><path d="M8.2 0.2 C9 2.4 10.8 3.6 10.6 6 C11.8 5.2 12 4 12 3.2 C14.4 5.6 15.6 8 14.6 10.8 C15.4 10.6 16 10 16.2 9.4 C16.4 13.4 13 16.6 8.2 16.6 C3.4 16.6 0 13.4 0.2 9.4 C0.4 10 1 10.6 1.8 10.8 C0.8 8 2 5.6 4.4 3.2 C4.4 4 4.6 5.2 5.8 6 C5.6 3.6 7.4 2.4 8.2 0.2 Z" fill="#e5482f"/><path d="M8.2 5.4 C9.2 7.2 11.4 8.4 11 11 C12 10.8 12.4 10.2 12.6 9.8 C12.8 13 11 15 8.2 15 C5.4 15 3.6 13 3.8 9.8 C4 10.2 4.4 10.8 5.4 11 C5 8.4 7.2 7.2 8.2 5.4 Z" fill="#f7a58f"/><ellipse cx="8.2" cy="12.6" rx="4.2" ry="2" fill="#f6e9e3"/></svg>
<svg class="r" style="left:429.9px;top:528.6px;" width="16.4" height="16.4" viewBox="0 0 16.4 16.4"><circle cx="8.2" cy="8.2" r="8.2" fill="#e84435"/><path d="M8.2 8.2 L1.1 4.1 A8.2 8.2 0 0 0 4.5 15.5 Z" fill="#2ea44f"/><path d="M8.2 8.2 L4.5 15.5 A8.2 8.2 0 0 0 16.4 8.2 A8.2 8.2 0 0 0 15.3 4.1 Z" fill="#fbc116"/><path d="M8.2 8.2 L15.3 4.1 A8.2 8.2 0 0 0 1.1 4.1 Z" fill="#e84435"/><circle cx="8.2" cy="8.2" r="3.7" fill="#fff"/><circle cx="8.2" cy="8.2" r="2.9" fill="#4a8af4"/></svg>
<div class="r" style="left:388.5px;top:550.3px;width:28.3px;height:1.7px;background:#3b8fe8;"></div>
<div class="r" style="left:422.6px;top:550.3px;width:29.4px;height:1.7px;background:#3b8fe8;"></div>
<div class="r" style="left:457.7px;top:550.3px;width:3px;height:1.7px;background:#3b8fe8;"></div>
<svg class="r" style="left:878.6px;top:534.8px;" width="9.2" height="5.4" viewBox="0 0 9.2 5.4"><path d="M0.5 5 L4.6 0.8 L8.7 5" fill="none" stroke="#222" stroke-width="1.1"/></svg>
<div class="t" style="top:525.52px;height:11.96px;line-height:11.96px;font-size:9.2px;color:#333;left:899.5px;letter-spacing:-0.660px;">2:27 PM</div>
<div class="t" style="top:537.92px;height:11.96px;line-height:11.96px;font-size:9.2px;color:#333;left:898.1px;letter-spacing:-0.358px;">4/4/2020</div>
<svg class="r" style="left:946px;top:532px;" width="11.4" height="10" viewBox="0 0 11.4 10"><path d="M0 0 H11.4 V7.6 H10.2 V9.6 L7.8 7.6 H0 Z" fill="#1b1b1b"/><path d="M1.8 2 H9.6 M1.8 3.9 H9.6 M1.8 5.8 H7" stroke="#d3e2ee" stroke-width="0.7"/></svg>
<div class="r" style="left:953px;top:538.4px;width:8.4px;height:8.4px;border-radius:50%;background:#d9d9d9;border:0.8px solid #6a6a6a;font-size:7px;line-height:8.4px;text-align:center;color:#222">1</div>
<div class="r" style="left:972px;top:523px;width:0.8px;height:29px;background:#aab4c2;"></div>
<div class="r" style="left:461.3px;top:186px;width:208.90000000000003px;height:364px;background:#f2f2f2;border:0.8px solid #c2c2c2;box-sizing:content-box"></div>
<div class="t" style="top:189.84px;height:11.31px;line-height:11.31px;font-size:8.7px;color:#111;left:479.3px;letter-spacing:-0.061px;">Show Context Actions</div>
<div class="t" style="top:189.84px;height:11.31px;line-height:11.31px;font-size:8.7px;color:#4a4a4a;left:627.3px;letter-spacing:-0.120px;">Alt+Enter</div>
<div class="r" style="left:462.3px;top:202.29999999999998px;width:207.90000000000003px;height:0.9px;background:#d4d4d4;"></div>
<div class="t" style="top:207.14px;height:11.31px;line-height:11.31px;font-size:8.7px;color:#111;left:479.3px;letter-spacing:-0.270px;">Cop<u>y</u> Reference</div>
<div class="t" style="top:207.14px;height:11.31px;line-height:11.31px;font-size:8.7px;color:#4a4a4a;left:598.7px;letter-spacing:0.061px;">Ctrl+Alt+Shift+C</div>
<div class="t" style="top:222.04px;height:11.31px;line-height:11.31px;font-size:8.7px;color:#111;left:479.3px;letter-spacing:-0.524px;"><u>P</u>aste</div>
<div class="t" style="top:222.04px;height:11.31px;line-height:11.31px;font-size:8.7px;color:#4a4a4a;left:639.2px;letter-spacing:-0.232px;">Ctrl+V</div>
<div class="t" style="top:237.04px;height:11.31px;line-height:11.31px;font-size:8.7px;color:#111;left:479.3px;letter-spacing:-0.102px;">Past<u>e</u> from History...</div>
<div class="t" style="top:237.04px;height:11.31px;line-height:11.31px;font-size:8.7px;color:#4a4a4a;left:615.5px;letter-spacing:-0.012px;">Ctrl+Shift+V</div>
<div class="t" style="top:251.94px;height:11.31px;line-height:11.31px;font-size:8.7px;color:#111;left:479.3px;letter-spacing:-0.046px;">Paste <u>w</u>ithout Formatting</div>
<div class="t" style="top:251.94px;height:11.31px;line-height:11.31px;font-size:8.7px;color:#4a4a4a;left:599.1px;letter-spacing:0.065px;">Ctrl+Alt+Shift+V</div>
<div class="t" style="top:266.94px;height:11.31px;line-height:11.31px;font-size:8.7px;color:#111;left:479.3px;letter-spacing:-0.049px;">Column Selection <u>M</u>ode</div>
<div class="t" style="top:266.94px;height:11.31px;line-height:11.31px;font-size:8.7px;color:#4a4a4a;left:602.9px;letter-spacing:-0.007px;">Alt+Shift+Insert</div>
<div class="r" style="left:462.3px;top:279.40000000000003px;width:207.90000000000003px;height:0.9px;background:#d4d4d4;"></div>
<div class="t" style="top:284.25px;height:11.31px;line-height:11.31px;font-size:8.7px;color:#111;left:479.3px;letter-spacing:-0.398px;">Find <u>U</u>sages</div>
<div class="t" style="top:284.25px;height:11.31px;line-height:11.31px;font-size:8.7px;color:#4a4a4a;left:637.8px;letter-spacing:-0.160px;">Alt+F7</div>
<div class="t" style="top:299.14px;height:11.31px;line-height:11.31px;font-size:8.7px;color:#111;left:479.3px;letter-spacing:-0.216px;"><u>F</u>ind Sample Code</div>
<div class="t" style="top:299.14px;height:11.31px;line-height:11.31px;font-size:8.7px;color:#4a4a4a;left:637.8px;letter-spacing:-0.160px;">Alt+F8</div>
<div class="t" style="top:313.94px;height:11.31px;line-height:11.31px;font-size:8.7px;color:#111;left:479.3px;letter-spacing:-0.243px;"><u>R</u>efactor</div>
<svg class="r" style="left:664.4px;top:315.9px;" width="3.6" height="5.2" viewBox="0 0 3.6 5.2"><path d="M0 0 L3.6 2.6 L0 5.2 Z" fill="#1a1a1a"/></svg>
<div class="r" style="left:462.3px;top:327.0px;width:207.90000000000003px;height:0.9px;background:#d4d4d4;"></div>
<div class="t" style="top:331.14px;height:11.31px;line-height:11.31px;font-size:8.7px;color:#111;left:479.3px;letter-spacing:-0.086px;">Folding</div>
<svg class="r" style="left:664.4px;top:333.09999999999997px;" width="3.6" height="5.2" viewBox="0 0 3.6 5.2"><path d="M0 0 L3.6 2.6 L0 5.2 Z" fill="#1a1a1a"/></svg>
<div class="t" style="top:346.25px;height:11.31px;line-height:11.31px;font-size:8.7px;color:#111;left:479.3px;letter-spacing:-0.232px;">Analy<u>z</u>e</div>
<svg class="r" style="left:664.4px;top:348.2px;" width="3.6" height="5.2" viewBox="0 0 3.6 5.2"><path d="M0 0 L3.6 2.6 L0 5.2 Z" fill="#1a1a1a"/></svg>
<div class="r" style="left:462.1px;top:360.0px;width:208.70000000000005px;height:15.1px;background:#3875d6;"></div>
<div class="t" style="top:363.05px;height:11.31px;line-height:11.31px;font-size:8.7px;color:#fff;left:479.3px;letter-spacing:-0.226px;">Go To</div>
<svg class="r" style="left:664.4px;top:365.0px;" width="3.6" height="5.2" viewBox="0 0 3.6 5.2"><path d="M0 0 L3.6 2.6 L0 5.2 Z" fill="#fff"/></svg>
<div class="t" style="top:377.84px;height:11.31px;line-height:11.31px;font-size:8.7px;color:#111;left:479.3px;letter-spacing:-0.324px;">Generate...</div>
<div class="t" style="top:377.84px;height:11.31px;line-height:11.31px;font-size:8.7px;color:#4a4a4a;left:625.7px;letter-spacing:-0.045px;">Alt+Insert</div>
<div class="r" style="left:462.3px;top:390.70000000000005px;width:207.90000000000003px;height:0.9px;background:#d4d4d4;"></div>
<div class="t" style="top:395.14px;height:11.31px;line-height:11.31px;font-size:8.7px;color:#111;left:479.3px;letter-spacing:0.038px;">R<u>u</u>n &#x27;MainActivity&#x27;</div>
<div class="t" style="top:395.14px;height:11.31px;line-height:11.31px;font-size:8.7px;color:#4a4a4a;left:607.7px;letter-spacing:-0.108px;">Ctrl+Shift+F10</div>
<div class="t" style="top:409.84px;height:11.31px;line-height:11.31px;font-size:8.7px;color:#111;left:479.3px;letter-spacing:0.056px;"><u>D</u>ebug &#x27;MainActivity&#x27;</div>
<div class="t" style="top:424.94px;height:11.31px;line-height:11.31px;font-size:8.7px;color:#111;left:479.3px;letter-spacing:0.045px;">Profile &#x27;MainActivity&#x27;</div>
<div class="r" style="left:462.3px;top:438.0px;width:207.90000000000003px;height:0.9px;background:#d4d4d4;"></div>
<div class="t" style="top:442.25px;height:11.31px;line-height:11.31px;font-size:8.7px;color:#111;left:479.3px;letter-spacing:-0.020px;">Create &#x27;MainActivity&#x27;...</div>
<div class="t" style="top:457.14px;height:11.31px;line-height:11.31px;font-size:8.7px;color:#111;left:479.3px;letter-spacing:-0.179px;">Show in Explorer</div>
<div class="t" style="top:471.84px;height:11.31px;line-height:11.31px;font-size:8.7px;color:#111;left:479.3px;letter-spacing:-0.311px;">File <u>P</u>ath</div>
<div class="t" style="top:471.84px;height:11.31px;line-height:11.31px;font-size:8.7px;color:#4a4a4a;left:614.4px;letter-spacing:-0.080px;">Ctrl+Alt+F12</div>
<div class="t" style="top:486.94px;height:11.31px;line-height:11.31px;font-size:8.7px;color:#111;left:479.3px;letter-spacing:-0.026px;">Open in Terminal</div>
<div class="r" style="left:462.3px;top:499.90000000000003px;width:207.90000000000003px;height:0.9px;background:#d4d4d4;"></div>
<div class="t" style="top:504.44px;height:11.31px;line-height:11.31px;font-size:8.7px;color:#111;left:479.3px;letter-spacing:-0.101px;">Local <u>H</u>istory</div>
<svg class="r" style="left:664.4px;top:506.4px;" width="3.6" height="5.2" viewBox="0 0 3.6 5.2"><path d="M0 0 L3.6 2.6 L0 5.2 Z" fill="#1a1a1a"/></svg>
<div class="r" style="left:462.3px;top:516.8000000000001px;width:207.90000000000003px;height:0.9px;background:#d4d4d4;"></div>
<div class="t" style="top:522.25px;height:11.31px;line-height:11.31px;font-size:8.7px;color:#111;left:479.3px;letter-spacing:-0.041px;">Compare with Clip<u>b</u>oard</div>
<div class="r" style="left:462.3px;top:534.1px;width:207.90000000000003px;height:0.9px;background:#d4d4d4;"></div>
<div class="t" style="top:539.15px;height:11.31px;line-height:11.31px;font-size:8.7px;color:#111;left:479.3px;letter-spacing:-0.292px;">Create Gist...</div>
<svg class="r" style="left:466.1px;top:189.2px;" width="7.4" height="10.8" viewBox="0 0 7 10.4"><path d="M3.5 0.2 A3.3 3.3 0 0 1 5.6 6 L5.4 7.2 H1.6 L1.4 6 A3.3 3.3 0 0 1 3.5 0.2 Z" fill="#6e6e6e"/><rect x="1.8" y="7.9" width="3.4" height="1" fill="#6e6e6e"/><rect x="2.4" y="9.3" width="2.2" height="0.9" fill="#6e6e6e"/></svg>
<svg class="r" style="left:466.3px;top:222px;" width="7.4" height="8.6" viewBox="0 0 7.4 8.6"><rect x="0.7" y="1.5" width="6" height="6.4" fill="none" stroke="#505050" stroke-width="1.35"/><rect x="2.2" y="0.2" width="3" height="2" fill="#555"/></svg>
<svg class="r" style="left:466.7px;top:395.8px;" width="7.6" height="8.6" viewBox="0 0 7.6 8.6"><path d="M0 0 L7.6 4.3 L0 8.6 Z" fill="#59a869"/></svg>
<svg class="r" style="left:465.8px;top:410px;" width="9.12" height="9.31" viewBox="0 0 9.6 9.8"><ellipse cx="4.8" cy="5.7" rx="3.3" ry="3.9" fill="#59a869"/><path d="M3 1.6 A1.9 1.7 0 0 1 6.6 1.6 Z" fill="#59a869"/><path d="M0.3 3.2 L2.4 4.2 M9.3 3.2 L7.2 4.2 M0 5.9 H2.2 M9.6 5.9 H7.4 M0.4 8.9 L2.4 7.6 M9.2 8.9 L7.2 7.6 M3.2 0.2 L3.8 1 M6.4 0.2 L5.8 1" stroke="#59a869" stroke-width="1.15"/><path d="M3 4.7 H6.6 M3 6.7 H6.6" stroke="#f2f2f2" stroke-width="0.6"/></svg>
<svg class="r" style="left:465.4px;top:426px;" width="9.6" height="7.2" viewBox="0 0 9.6 7.2"><path d="M1 6.8 A3.9 3.9 0 0 1 7.2 2" fill="none" stroke="#389fd6" stroke-width="1.9"/><path d="M7.8 2.8 A3.9 3.9 0 0 1 8.8 6.8" fill="none" stroke="#5a5a5a" stroke-width="1.7"/><path d="M4.7 7 L6.6 3.4" stroke="#5a5a5a" stroke-width="1.5"/></svg>
<svg class="r" style="left:465.6px;top:443.6px;" width="9" height="6.6" viewBox="0 0 13 9"><path d="M0.4 8.8 A6.1 6 0 0 1 12.6 8.8 Z" fill="#3ddc84"/><path d="M3.2 3.6 L1.9 1.4 M9.8 3.6 L11.1 1.4" stroke="#3ddc84" stroke-width="1" stroke-linecap="round"/><circle cx="3.9" cy="6.3" r="0.6" fill="#eafff3"/><circle cx="9.1" cy="6.3" r="0.6" fill="#eafff3"/></svg>
<svg class="r" style="left:466.3px;top:487.8px;" width="7.8" height="7.2" viewBox="0 0 7.8 7.2"><rect width="7.8" height="7.2" fill="#5a5a5a"/><path d="M1.4 1.6 L3.2 3.2 L1.4 4.8 M3.8 5.4 H6.2" fill="none" stroke="#f2f2f2" stroke-width="0.8"/></svg>
<svg class="r" style="left:465px;top:521.4px;" width="11" height="10.4" viewBox="0 0 11 10.4"><path d="M0.7 1.8 H6.2 V3 M0.7 1.8 V8.4 H2.6" fill="none" stroke="#5a5a5a" stroke-width="1.2"/><rect x="2" y="0.3" width="2.8" height="2" fill="#5a5a5a"/><path d="M7 2.4 L8.1 5.1 L10.9 6.1 L8.1 7.1 L7 10 L5.9 7.1 L3.1 6.1 L5.9 5.1 Z" fill="#389fd6"/></svg>
<svg class="r" style="left:465px;top:538.3px;" width="10" height="10" viewBox="0 0 9.2 9.2"><circle cx="4.6" cy="4.6" r="4.6" fill="#1b1b1b"/><ellipse cx="4.6" cy="4.5" rx="2.7" ry="2.2" fill="#f2f2f2"/><path d="M2 2.2 L2.2 4 L3.6 2.8 Z M7.2 2.2 L7 4 L5.6 2.8 Z" fill="#f2f2f2"/><path d="M3.6 6.2 H5.6 V9 H3.6 Z" fill="#f2f2f2"/><path d="M3.6 7.6 C2.6 7.9 2.2 7.2 1.8 6.8" fill="none" stroke="#f2f2f2" stroke-width="0.6"/></svg>
<div class="r" style="left:668.6px;top:358.4px;width:160.39999999999998px;height:90px;background:#f2f2f2;border:0.8px solid #c2c2c2;box-sizing:content-box"></div>
<div class="t" style="top:362.34px;height:11.31px;line-height:11.31px;font-size:8.7px;color:#111;left:686.5px;letter-spacing:-0.099px;">Navigation Bar</div>
<div class="t" style="top:362.34px;height:11.31px;line-height:11.31px;font-size:8.7px;color:#4a4a4a;left:781.6px;letter-spacing:0.114px;">Alt+Home</div>
<div class="r" style="left:669.4px;top:374.3px;width:160.2px;height:14.7px;background:#3875d6;"></div>
<div class="t" style="top:377.25px;height:11.31px;line-height:11.31px;font-size:8.7px;color:#fff;left:686.5px;letter-spacing:-0.231px;"><u>D</u>eclaration or Usages</div>
<div class="t" style="top:377.25px;height:11.31px;line-height:11.31px;font-size:8.7px;color:#fff;left:797px;letter-spacing:-0.082px;">Ctrl+B</div>
<div class="t" style="top:392.25px;height:11.31px;line-height:11.31px;font-size:8.7px;color:#111;left:686.5px;letter-spacing:0.004px;">I<u>m</u>plementation(s)</div>
<div class="t" style="top:392.25px;height:11.31px;line-height:11.31px;font-size:8.7px;color:#4a4a4a;left:780.6px;letter-spacing:0.071px;">Ctrl+Alt+B</div>
<div class="t" style="top:407.25px;height:11.31px;line-height:11.31px;font-size:8.7px;color:#111;left:686.5px;letter-spacing:-0.188px;"><u>T</u>ype Declaration</div>
<div class="t" style="top:407.25px;height:11.31px;line-height:11.31px;font-size:8.7px;color:#4a4a4a;left:774px;letter-spacing:0.005px;">Ctrl+Shift+B</div>
<div class="t" style="top:422.25px;height:11.31px;line-height:11.31px;font-size:8.7px;color:#111;left:686.5px;letter-spacing:-0.148px;">S<u>u</u>per Method</div>
<div class="t" style="top:422.25px;height:11.31px;line-height:11.31px;font-size:8.7px;color:#4a4a4a;left:796.5px;letter-spacing:-0.077px;">Ctrl+U</div>
<div class="t" style="top:437.14px;height:11.31px;line-height:11.31px;font-size:8.7px;color:#111;left:686.5px;letter-spacing:-0.384px;">T<u>e</u>st</div>
<div class="t" style="top:437.14px;height:11.31px;line-height:11.31px;font-size:8.7px;color:#4a4a4a;left:774.6px;letter-spacing:-0.005px;">Ctrl+Shift+T</div>
</body></html>
